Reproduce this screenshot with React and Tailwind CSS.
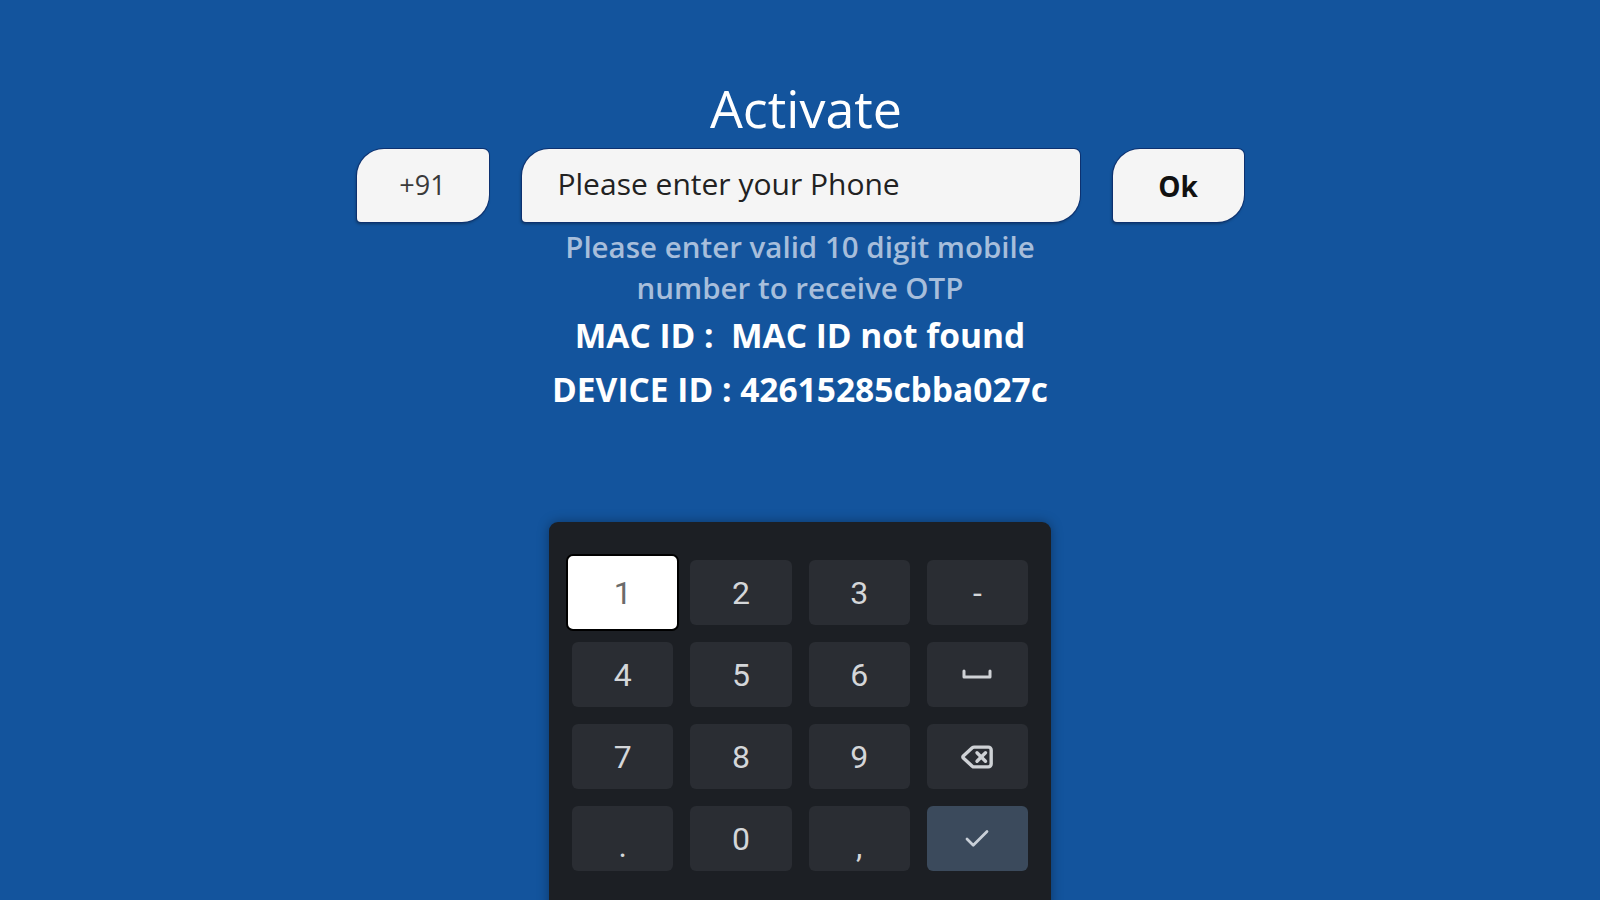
import React from 'react';
import { Check, Delete } from 'lucide-react';

const KEYS = [
  { label: '1', focused: true },
  { label: '2' },
  { label: '3' },
  { label: '-' },
  { label: '4' },
  { label: '5' },
  { label: '6' },
  { label: 'space' },
  { label: '7' },
  { label: '8' },
  { label: '9' },
  { label: 'backspace' },
  { label: '.' },
  { label: '0' },
  { label: ',' },
  { label: 'done' },
];

const SpaceIcon = () => (
  <svg width="32" height="14" viewBox="0 0 32 14" fill="none">
    <path d="M3 3v6h26V3" stroke="#cfd2d6" strokeWidth="3" strokeLinecap="round" strokeLinejoin="round" />
  </svg>
);

const Key = ({ label, focused }) => {
  let content = label;
  if (label === 'space') content = <SpaceIcon />;
  if (label === 'backspace') content = <Delete size={34} strokeWidth={2.4} className="text-[#cfd2d6]" />;
  if (label === 'done') content = <Check size={30} strokeWidth={2.2} className="text-[#c9d0d8]" />;

  if (focused) {
    return (
      <div className="-m-[6px] h-[77px] rounded-[7px] border-[2px] border-black bg-white flex items-center justify-center text-[32px] text-[#6b6b6b] font-['Roboto',sans-serif]">
        {content}
      </div>
    );
  }

  return (
    <div
      className={`h-[65px] rounded-[6px] flex items-center justify-center text-[32px] text-[#d4d6d9] font-['Roboto',sans-serif] ${
        label === 'done' ? 'bg-[#3b4a5c]' : 'bg-[#2a2d33]'
      } ${label === '.' || label === ',' ? 'pt-[14px]' : ''}`}
    >
      {content}
    </div>
  );
};

const App = () => {
  return (
    <div className="h-screen w-full overflow-hidden bg-[#13549d] font-['Open_Sans',sans-serif] flex flex-col items-center pt-[72px]">
      {/* Title */}
      <h1 className="text-[52px] leading-[71px] text-white pl-[12px]">Activate</h1>

      {/* Phone row */}
      <div className="mt-[6px] flex items-center gap-[33px]">
        <div className="w-[132px] h-[73px] bg-[#f5f5f5] rounded-tl-[27px] rounded-br-[27px] rounded-tr-[6px] rounded-bl-[4px] shadow-[0_0_0_1px_#0d3170,-1px_2px_3px_rgba(0,0,0,0.35)] flex items-center justify-center text-[27px] text-[#3a3a3a]">
          +91
        </div>
        <div className="w-[558px] h-[73px] bg-[#f5f5f5] rounded-tl-[27px] rounded-br-[27px] rounded-tr-[6px] rounded-bl-[4px] shadow-[0_0_0_1px_#0d3170,-1px_2px_3px_rgba(0,0,0,0.35)] flex items-center pl-[36px] pb-[4px] text-[30px] text-[#222]">
          Please enter your Phone
        </div>
        <div className="w-[131px] h-[73px] bg-[#f5f5f5] rounded-tl-[27px] rounded-br-[27px] rounded-tr-[6px] rounded-bl-[4px] shadow-[0_0_0_1px_#0d3170,-1px_2px_3px_rgba(0,0,0,0.35)] flex items-center justify-center text-[28px] font-bold text-[#111]">
          Ok
        </div>
      </div>

      {/* Hint */}
      <p className="mt-[4px] w-[540px] text-center text-[29.5px] leading-[41px] font-semibold text-[#a7bedb]">
        Please enter valid 10 digit mobile number to receive OTP
      </p>

      {/* Ids */}
      <div className="text-center text-white font-bold text-[33.5px] leading-[54px]">
        <p>MAC ID :&nbsp; MAC ID not found</p>
        <p>DEVICE ID : 42615285cbba027c</p>
      </div>

      {/* Numeric keypad */}
      <div className="mt-[106px] w-[502px] shrink-0 rounded-t-[9px] bg-[#1c1f24] px-[23px] pt-[38px] pb-[60px] shadow-[0_0_12px_rgba(0,0,0,0.35)]">
        <div className="grid grid-cols-4 gap-[17px]">
          {KEYS.map((k) => (
            <Key key={k.label} {...k} />
          ))}
        </div>
      </div>
    </div>
  );
};

export default App;
